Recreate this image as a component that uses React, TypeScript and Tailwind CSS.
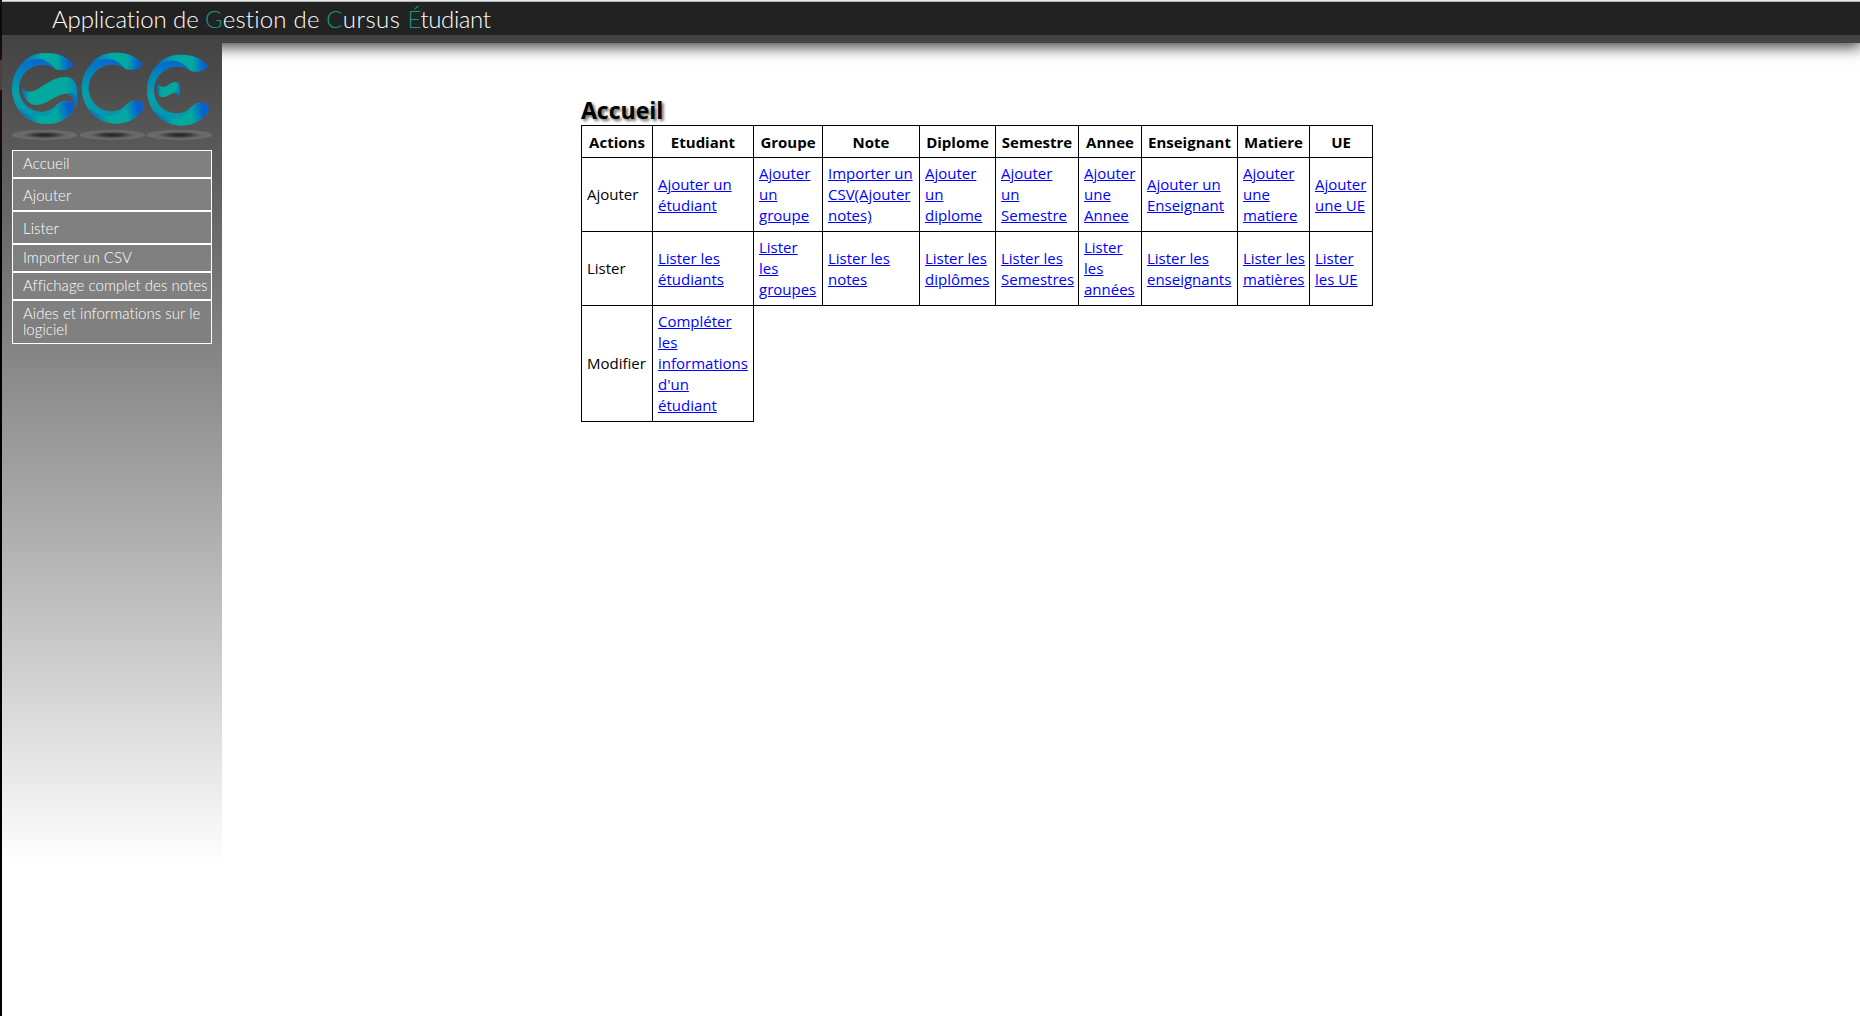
import React from "react";

type Cell = string[];

const columns = ["Actions", "Etudiant", "Groupe", "Note", "Diplome", "Semestre", "Annee", "Enseignant", "Matiere", "UE"];

const rows: { action: string; height: string; cells: Cell[] }[] = [
  {
    action: "Ajouter",
    height: "h-[74px]",
    cells: [
      ["Ajouter un", "étudiant"],
      ["Ajouter", "un", "groupe"],
      ["Importer un", "CSV(Ajouter", "notes)"],
      ["Ajouter", "un", "diplome"],
      ["Ajouter", "un", "Semestre"],
      ["Ajouter", "une", "Annee"],
      ["Ajouter un", "Enseignant"],
      ["Ajouter", "une", "matiere"],
      ["Ajouter", "une UE"],
    ],
  },
  {
    action: "Lister",
    height: "h-[74px]",
    cells: [
      ["Lister les", "étudiants"],
      ["Lister", "les", "groupes"],
      ["Lister les", "notes"],
      ["Lister les", "diplômes"],
      ["Lister les", "Semestres"],
      ["Lister", "les", "années"],
      ["Lister les", "enseignants"],
      ["Lister les", "matières"],
      ["Lister", "les UE"],
    ],
  },
  {
    action: "Modifier",
    height: "h-[116px]",
    cells: [["Compléter", "les", "informations", "d'un", "étudiant"]],
  },
];

const menu = [
  { lines: ["Accueil"], box: "h-[28px] pt-[4px]" },
  { lines: ["Ajouter"], box: "h-[33px] pt-[8px]" },
  { lines: ["Lister"], box: "h-[33px] pt-[8px]" },
  { lines: ["Importer un CSV"], box: "h-[28px] pt-[4px]" },
  { lines: ["Affichage complet des notes"], box: "h-[28px] pt-[4px]" },
  { lines: ["Aides et informations sur le", "logiciel"], box: "h-[44px] pt-[4px]" },
];

function Ring({ x, y }: { x: number; y: number }) {
  return (
    <g transform={`translate(${x} ${y})`}>
      <path
        d="M72 186 C88 166 112 159 140 159 C176 159 203 172 219 194 C207 210 188 213 168 208 C150 196 140 194 118 196 C80 202 57 232 57 266 C57 305 88 335 126 335 C142 335 152 330 162 322 C176 306 190 301 205 304 C219 308 225 318 219 329 C204 358 172 372 140 372 C82 372 36 325 36 266 C36 232 50 204 72 186Z"
        fill="url(#ring)"
      />
      <path
        d="M62 195 C84 166 112 159 140 159 C176 159 203 172 219 194 C207 210 188 213 168 208 C156 196 142 180 118 177 C98 176 80 182 62 195Z"
        fill="url(#cap)"
      />
      <path
        d="M56 326 C76 345 98 351 126 349 C158 347 166 322 178 311 C192 301 210 301 219 311 C223 318 222 325 219 329 C204 358 172 372 140 372 C104 372 76 354 56 326Z"
        fill="url(#foot)"
      />
    </g>
  );
}

function Logo() {
  return (
    <svg viewBox="36 150 600 275" className="block h-[91.67px] w-[200px]">
      <defs>
        <linearGradient id="ring" x1="0.3" y1="0" x2="0.2" y2="1">
          <stop offset="0.08" stopColor="#0668d0" />
          <stop offset="0.3" stopColor="#0583bb" />
          <stop offset="0.6" stopColor="#05a0a8" />
          <stop offset="0.8" stopColor="#0498ae" />
          <stop offset="1" stopColor="#0498ae" />
        </linearGradient>
        <linearGradient id="cap" x1="0" y1="0" x2="1" y2="0">
          <stop offset="0" stopColor="#0568cf" />
          <stop offset="0.38" stopColor="#03a89f" />
          <stop offset="0.7" stopColor="#03a89f" />
          <stop offset="0.92" stopColor="#0560d2" />
        </linearGradient>
        <linearGradient id="foot" x1="0" y1="0" x2="1" y2="-0.1">
          <stop offset="0" stopColor="#0568cf" />
          <stop offset="0.28" stopColor="#03a89f" />
          <stop offset="0.62" stopColor="#03a89f" />
          <stop offset="0.86" stopColor="#0560d2" />
        </linearGradient>
        <linearGradient id="wave" x1="0" y1="0" x2="1" y2="0">
          <stop offset="0" stopColor="#0568cf" />
          <stop offset="0.14" stopColor="#03a89f" />
          <stop offset="0.8" stopColor="#03a89f" />
          <stop offset="1" stopColor="#0583bb" />
        </linearGradient>
        <radialGradient id="shade">
          <stop offset="0" stopColor="#1e1e1e" />
          <stop offset="0.35" stopColor="#3e3e3e" />
          <stop offset="0.65" stopColor="#676767" />
          <stop offset="1" stopColor="#6c6c6c" />
        </radialGradient>
      </defs>
      <ellipse cx="134" cy="405" rx="98" ry="15" fill="url(#shade)" />
      <ellipse cx="337" cy="405" rx="98" ry="15" fill="url(#shade)" />
      <ellipse cx="538" cy="405" rx="98" ry="15" fill="url(#shade)" />
      <Ring x={0} y={0} />
      <Ring x={209} y={-1} />
      <Ring x={405} y={5} />
      <path
        d="M65 263 C76 278 92 278 112 268 C145 247 168 230 198 231 C224 232 233 252 232 285 C232 302 229 318 225 330 C225 306 222 292 205 282 C176 275 150 310 112 315 C86 316 72 296 65 263Z"
        fill="url(#wave)"
      />
      <path d="M205 279 C221 279 229 292 231 300 C229 315 227 323 225 330 C225 306 222 291 205 279Z" fill="#0570c8" />
      <path
        d="M474 252 C482 264 493 263 506 254 C517 245 528 243 537 250 C540 264 540 279 537 292 C532 280 524 277 514 281 C501 290 489 294 477 289 C473 277 472 264 474 252Z"
        fill="url(#wave)"
      />
      <path d="M522 276 C532 273 537 279 538 284 L537 292 C532 281 529 278 522 276Z" fill="#0568cf" />
    </svg>
  );
}

function Menu() {
  return (
    <nav className="w-[200px] font-['Lato'] text-[15px] leading-[16px] font-light text-white">
      {menu.map((item) => (
        <a key={item.lines[0]} className={`block border border-white bg-[#808080] pl-[10px] whitespace-nowrap ${item.box}`}>
          {item.lines.map((line) => (
            <span key={line} className="block tracking-[0.04px]">{line}</span>
          ))}
        </a>
      ))}
    </nav>
  );
}

function ActionsTable() {
  return (
    <table className="w-[792px] table-fixed border-collapse text-[15px] leading-[21px] text-black">
      <colgroup>
        <col className="w-[71px]" />
        <col className="w-[101px]" />
        <col className="w-[69px]" />
        <col className="w-[97px]" />
        <col className="w-[76px]" />
        <col className="w-[83px]" />
        <col className="w-[63px]" />
        <col className="w-[96px]" />
        <col className="w-[72px]" />
        <col className="w-[63px]" />
      </colgroup>
      <thead>
        <tr className="h-[32px]">
          {columns.map((name) => (
            <th key={name} className="border border-black p-0 pt-px text-center font-bold">{name}</th>
          ))}
        </tr>
      </thead>
      <tbody>
        {rows.map((row) => (
          <tr key={row.action} className={row.height}>
            <td className="border border-black py-0 pr-0 pl-[5px]">{row.action}</td>
            {row.cells.map((lines, i) => (
              <td key={i} className="border border-black py-0 pr-0 pl-[5px] whitespace-nowrap">
                <a className="text-[#0000ff] underline">
                  {lines.map((line, n) => (
                    <React.Fragment key={n}>
                      {n > 0 && <br />}
                      {line}
                    </React.Fragment>
                  ))}
                </a>
              </td>
            ))}
          </tr>
        ))}
      </tbody>
    </table>
  );
}

export default function App() {
  return (
    <div className="flex h-[1016px] w-[1860px] overflow-hidden bg-white">
      <div className="flex w-[2px] shrink-0 flex-col bg-black">
        <div className="h-[60px] bg-[#1c1010]" />
        <div className="h-[30px] bg-[#4a4040]" />
        <div className="h-[300px] bg-linear-to-b from-[#1c1010] to-black" />
      </div>
      <div className="flex min-w-0 flex-1 flex-col">
        <div className="relative z-10 h-px shrink-0 bg-[#e4e6e6]" />
        <div className="relative z-10 h-px shrink-0 bg-[#b4b8b8]" />
        <header className="relative h-[41px] shrink-0 border-b-8 border-[#444] bg-[#222] pl-[50px] shadow-[0_2px_14px_2px_rgba(0,0,0,0.75)]">
          <h1 className="font-['Lato'] text-[24px] leading-[33px] font-light whitespace-nowrap text-white">
            <span className="tracking-[-0.1px]">Application de </span>
            <span className="tracking-[0.2px]">
              <span className="text-[#0f9a80]">G</span>estion de{" "}
            </span>
            <span className="tracking-[0.5px]">
              <span className="text-[#0f9a80]">C</span>ursus{" "}
            </span>
            <span className="tracking-[-0.4px]">
              <span className="text-[#0f9a80]">É</span>tudiant
            </span>
          </h1>
        </header>
        <div className="flex flex-1">
          <aside className="relative h-[822px] w-[220px] bg-linear-to-b from-[#444] to-white pt-[7px] pl-[10px]">
            <Logo />
            <div className="pt-[8px]">
              <Menu />
            </div>
          </aside>
          <main className="pt-[52px] pl-[359px] font-['Open_Sans']">
            <h2 className="h-[30px] text-[23px] leading-[31px] font-bold text-black [text-shadow:2px_2px_3px_#666]">Accueil</h2>
            <ActionsTable />
          </main>
        </div>
      </div>
    </div>
  );
}
